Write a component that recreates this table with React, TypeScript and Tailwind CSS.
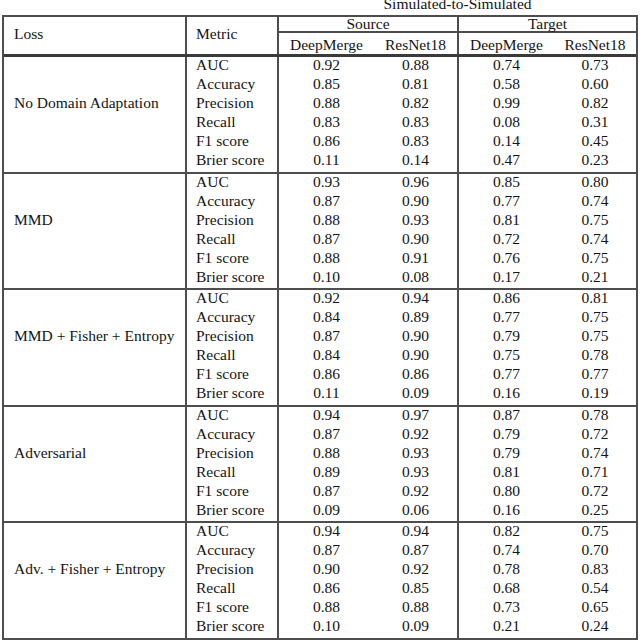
import React from 'react';

type Group = {
  loss: string;
  rows: [string, string, string, string][];
};

const metrics = ['AUC', 'Accuracy', 'Precision', 'Recall', 'F1 score', 'Brier score'];

const groups: Group[] = [
  {
    loss: 'No Domain Adaptation',
    rows: [
      ['0.92', '0.88', '0.74', '0.73'],
      ['0.85', '0.81', '0.58', '0.60'],
      ['0.88', '0.82', '0.99', '0.82'],
      ['0.83', '0.83', '0.08', '0.31'],
      ['0.86', '0.83', '0.14', '0.45'],
      ['0.11', '0.14', '0.47', '0.23'],
    ],
  },
  {
    loss: 'MMD',
    rows: [
      ['0.93', '0.96', '0.85', '0.80'],
      ['0.87', '0.90', '0.77', '0.74'],
      ['0.88', '0.93', '0.81', '0.75'],
      ['0.87', '0.90', '0.72', '0.74'],
      ['0.88', '0.91', '0.76', '0.75'],
      ['0.10', '0.08', '0.17', '0.21'],
    ],
  },
  {
    loss: 'MMD + Fisher + Entropy',
    rows: [
      ['0.92', '0.94', '0.86', '0.81'],
      ['0.84', '0.89', '0.77', '0.75'],
      ['0.87', '0.90', '0.79', '0.75'],
      ['0.84', '0.90', '0.75', '0.78'],
      ['0.86', '0.86', '0.77', '0.77'],
      ['0.11', '0.09', '0.16', '0.19'],
    ],
  },
  {
    loss: 'Adversarial',
    rows: [
      ['0.94', '0.97', '0.87', '0.78'],
      ['0.87', '0.92', '0.79', '0.72'],
      ['0.88', '0.93', '0.79', '0.74'],
      ['0.89', '0.93', '0.81', '0.71'],
      ['0.87', '0.92', '0.80', '0.72'],
      ['0.09', '0.06', '0.16', '0.25'],
    ],
  },
  {
    loss: 'Adv. + Fisher + Entropy',
    rows: [
      ['0.94', '0.94', '0.82', '0.75'],
      ['0.87', '0.87', '0.74', '0.70'],
      ['0.90', '0.92', '0.78', '0.83'],
      ['0.86', '0.85', '0.68', '0.54'],
      ['0.88', '0.88', '0.73', '0.65'],
      ['0.10', '0.09', '0.21', '0.24'],
    ],
  },
];

// column widths (border included where a cell carries border-r)
const W = {
  loss: 'w-[183px]',
  metric: 'w-[92px]',
  dm: 'w-[95px]',
  dm2: 'w-[95px]',
};

const GroupBlock: React.FC<{ group: Group; last: boolean }> = ({ group, last }) => (
  <div className={`flex ${last ? 'h-[114.5px]' : 'h-[116.5px] border-b-2 border-[#4d4d4d]'}`}>
    {/* loss label sits on the third row, like a multirow cell */}
    <div className={`${W.loss} shrink-0 border-r-2 border-[#4d4d4d] flex flex-col pl-[10px]`}>
      {metrics.map((m, i) => (
        <div key={m} className="flex-1 leading-[15px] whitespace-nowrap">{i === 2 ? group.loss : ''}</div>
      ))}
    </div>
    <div className={`${W.metric} shrink-0 border-r-2 border-[#4d4d4d] flex flex-col pl-[9px]`}>
      {metrics.map(m => (
        <div key={m} className="flex-1 leading-[15px]">{m}</div>
      ))}
    </div>
    <div className="w-[180px] shrink-0 border-r-2 border-[#4d4d4d] flex flex-col">
      {group.rows.map((r, i) => (
        <div key={i} className="flex-1 flex leading-[15px]">
          <div className={`${W.dm} text-center`}>{r[0]}</div>
          <div className="flex-1 text-center">{r[1]}</div>
        </div>
      ))}
    </div>
    <div className="flex-1 flex flex-col">
      {group.rows.map((r, i) => (
        <div key={i} className="flex-1 flex leading-[15px]">
          <div className={`${W.dm2} text-center`}>{r[2]}</div>
          <div className="flex-1 text-center">{r[3]}</div>
        </div>
      ))}
    </div>
  </div>
);

export default function App() {
  return (
    <div
      className="w-[640px] h-[641px] bg-white text-[#141414] text-[15.5px] overflow-hidden"
      style={{ fontFamily: '"Liberation Serif", "Times New Roman", serif' }}
    >
      <div className="h-[15px] overflow-hidden flex">
        <div className="ml-[279px] w-[357px] text-center leading-[17px] -mt-[5px]">
          Simulated-to-Simulated
        </div>
      </div>

      <div className="ml-[2px] w-[636px] border-2 border-[#4d4d4d]">
        {/* header */}
        <div className="flex h-[40px] border-b-[3px] border-[#3a3a3a]">
          <div className={`${W.loss} shrink-0 border-r-2 border-[#4d4d4d] flex items-center pl-[10px] pb-[4px]`}>
            Loss
          </div>
          <div className={`${W.metric} shrink-0 border-r-2 border-[#4d4d4d] flex items-center pl-[9px] pb-[4px]`}>
            Metric
          </div>
          <div className="w-[180px] shrink-0 border-r-2 border-[#4d4d4d] flex flex-col">
            <div className="h-[18px] border-b-2 border-[#4d4d4d] text-center leading-[14px]">Source</div>
            <div className="flex-1 flex items-center pb-[3px]">
              <div className={`${W.dm} text-center`}>DeepMerge</div>
              <div className="flex-1 text-center">ResNet18</div>
            </div>
          </div>
          <div className="flex-1 flex flex-col">
            <div className="h-[18px] border-b-2 border-[#4d4d4d] text-center leading-[14px]">Target</div>
            <div className="flex-1 flex items-center pb-[3px]">
              <div className={`${W.dm2} text-center`}>DeepMerge</div>
              <div className="flex-1 text-center">ResNet18</div>
            </div>
          </div>
        </div>

        {groups.map((g, i) => (
          <GroupBlock key={g.loss} group={g} last={i === groups.length - 1} />
        ))}
      </div>
    </div>
  );
}
